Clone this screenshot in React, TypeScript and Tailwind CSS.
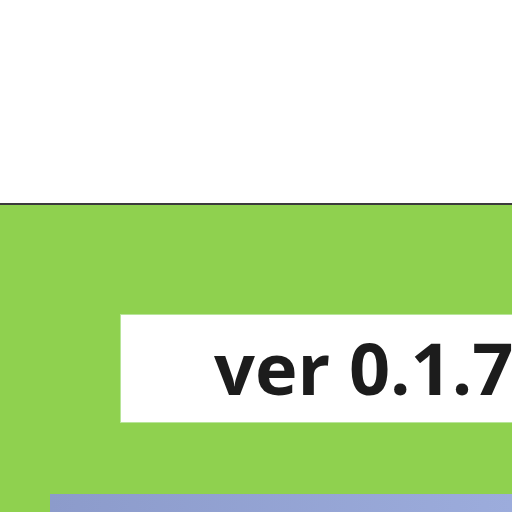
export default function App() {
  return (
    <div className="w-[512px] h-[512px] overflow-hidden bg-white flex flex-col">
      <div className="h-[203px] shrink-0 bg-white" />
      <div className="h-[2px] shrink-0 bg-[#3b3b3b]" />
      <div className="flex-1 bg-[#8fd14f] flex flex-col pt-[109px] overflow-hidden">
        <div className="ml-[120px] w-[480px] h-[109px] shrink-0 bg-white border border-[#b8e59a] flex items-center">
          <span
            className="pl-[93px] pb-[4px] text-[72px] font-bold leading-none text-[#1c1c1c] whitespace-nowrap"
            style={{ fontFamily: '"Open Sans", sans-serif' }}
          >
            ver 0.1.7
          </span>
        </div>
        <div className="mt-[71px] ml-[50px] flex-1 bg-gradient-to-r from-[#8c9bcb] to-[#9cacdc]" />
      </div>
    </div>
  );
}
